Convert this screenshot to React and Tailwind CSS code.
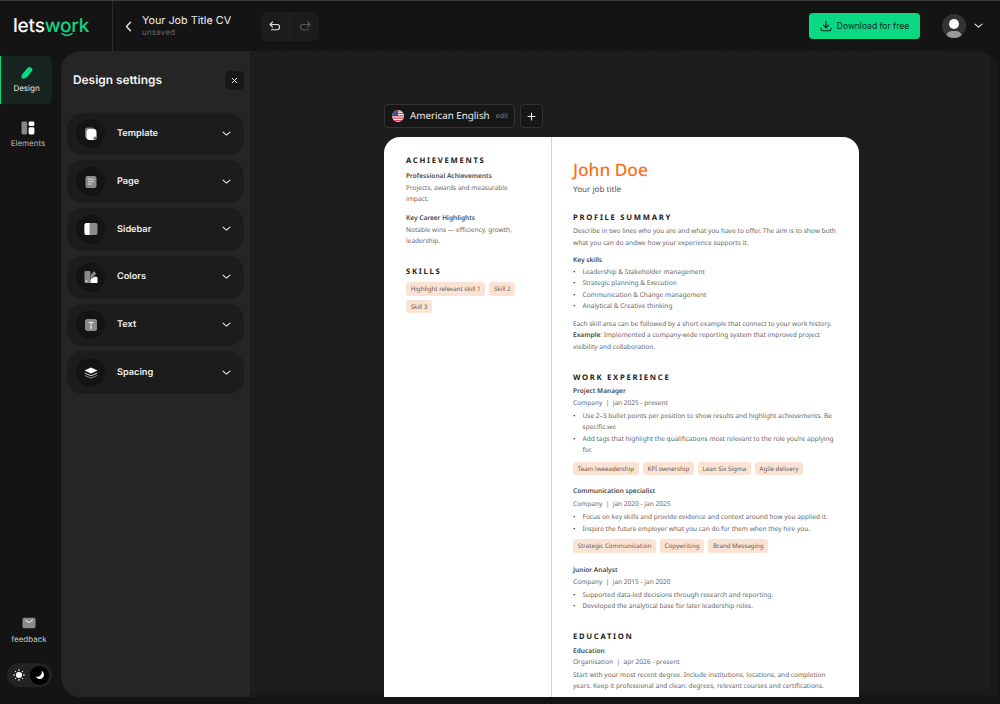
import React from "react";

const H = ({ children, className = "" }) => (
  <h2 className={`text-[7.7px] leading-[12px] font-bold tracking-[1.7px] text-[#222] ${className}`}>{children}</h2>
);
const B = ({ children, className = "" }) => (
  <p className={`font-semibold text-[#484848] ${className}`}>{children}</p>
);
const Bullets = ({ items, className = "" }) => (
  <ul className={className}>
    {items.map((t) => (
      <li key={t} className="flex">
        <span className="w-[9.5px] shrink-0 text-[#333]">•</span>
        <span>{t}</span>
      </li>
    ))}
  </ul>
);
const Tags = ({ items, className = "" }) => (
  <div className={`flex flex-wrap gap-x-[4px] gap-y-[4px] ${className}`}>
    {items.map((t) => (
      <span key={t} className="h-[13.5px] px-[4.7px] rounded-[3px] bg-[#fbe3d3] text-[#6b5a50] text-[6.2px] leading-[13.5px]">{t}</span>
    ))}
  </div>
);

const Chevron = () => (
  <svg width="9" height="6" viewBox="0 0 9 6" fill="none" stroke="#e5e5e5" strokeWidth="1.1" strokeLinecap="round" strokeLinejoin="round"><path d="M1 1.2l3.5 3 3.5-3" /></svg>
);

const icons = {
  Template: (
    <svg width="14" height="14" viewBox="0 0 14 14"><rect x="1" y="0.5" width="9.5" height="11" rx="2.5" fill="#777" /><rect x="2.5" y="2" width="10" height="11" rx="3" fill="#fff" /><circle cx="11" cy="11.2" r="1.6" fill="#777" /></svg>
  ),
  Page: (
    <svg width="14" height="14" viewBox="0 0 14 14"><rect x="1.5" y="1" width="11" height="12" rx="2" fill="#8a8a8a" /><path d="M4 4.2h6M4 6.6h6M4 9h4" stroke="#dcdcdc" strokeWidth="0.9" /></svg>
  ),
  Sidebar: (
    <svg width="14" height="14" viewBox="0 0 14 14"><rect x="0.5" y="1" width="13" height="12" rx="2" fill="#8a8a8a" /><path d="M2.5 1H5.5V13H2.5a2 2 0 0 1-2-2V3a2 2 0 0 1 2-2z" fill="#fff" /></svg>
  ),
  Colors: (
    <svg width="14" height="14" viewBox="0 0 14 14"><rect x="0.5" y="1" width="6" height="12" rx="1" fill="#8a8a8a" /><path d="M7 4.5L10 1.2l2.2 2.2L7 9z" fill="#8a8a8a" /><path d="M6.5 13V9.5L10 6.8h2.3q1.2 0 1.2 1.2V13z" fill="#fff" /><circle cx="2.5" cy="11" r="0.8" fill="#fff" /></svg>
  ),
  Text: (
    <svg width="14" height="14" viewBox="0 0 14 14"><rect x="1" y="1" width="12" height="12" rx="2.5" fill="#8a8a8a" /><path d="M4.5 4.5h5M7 4.5v5.5M5.8 10h2.4" stroke="#eee" strokeWidth="1" fill="none" /></svg>
  ),
  Spacing: (
    <svg width="14" height="12" viewBox="0 0 14 12"><path d="M7 0.5l6.5 3-6.5 3-6.5-3z" fill="#fff" /><path d="M0.7 6l6.3 2.8L13.3 6" fill="none" stroke="#c8c8c8" strokeWidth="1" /><path d="M0.7 8.4l6.3 2.8 6.3-2.8" fill="none" stroke="#8a8a8a" strokeWidth="1" /></svg>
  ),
};

const Row = ({ name }) => (
  <div className="h-[42.7px] rounded-[16px] bg-[#1c1c1c] flex items-center pl-[9px] pr-[13px]">
    <span className="w-[29px] h-[29px] rounded-full bg-[#141414] flex items-center justify-center shrink-0">{icons[name]}</span>
    <span className="ml-[12px] flex-1 text-[9.2px] font-semibold text-[#f0f0f0]">{name}</span>
    <Chevron />
  </div>
);

export default function App() {
  return (
    <div className="w-[1000px] h-[704px] bg-[#141414] overflow-hidden flex flex-col border-t border-[#3a3a3a] font-['Inter',sans-serif] text-white antialiased [text-rendering:geometricPrecision]">
      {/* Header */}
      <header className="h-[50px] shrink-0 flex items-stretch">
        <div className="w-[113px] border-r border-[#2c2c2c] flex items-center pl-[13px] pb-[1px]">
          <span className="text-[19px] font-medium tracking-[-0.2px] leading-none relative">
            lets<span className="text-[#0fd686]">work</span>
            <svg className="absolute left-[47px] top-[16px]" width="14" height="6" viewBox="0 0 14 6" fill="none" stroke="#0fd686" strokeWidth="1.6" strokeLinecap="round"><path d="M2 1.5q5 4 10 0" /></svg>
          </span>
        </div>
        <div className="flex items-center pl-[12px]">
          <svg width="7" height="11" viewBox="0 0 7 11" fill="none" stroke="#eee" strokeWidth="1.3" strokeLinecap="round" strokeLinejoin="round"><path d="M5.5 1.2L1.5 5.5l4 4.3" /></svg>
          <div className="ml-[10px] w-[119px] pb-[2px]">
            <div className="text-[10.8px] leading-[13px] font-normal text-[#ededed] whitespace-nowrap">Your Job Title CV</div>
            <div className="text-[8px] leading-[10px] text-[#666] tracking-[0.2px]">unsaved</div>
          </div>
          <div className="h-[29px] w-[58px] rounded-[6px] bg-[#1c1c1c] flex items-center">
            <div className="w-[29px] h-full flex items-center justify-center border-r border-[#252525]">
              <svg width="12" height="11" viewBox="0 0 12 11" fill="none" stroke="#e0e0e0" strokeWidth="1.1" strokeLinecap="round" strokeLinejoin="round"><path d="M3.5 1L1 3.5 3.5 6M1 3.5h7a2.6 2.6 0 0 1 0 5.2H2.5" /></svg>
            </div>
            <div className="w-[29px] h-full flex items-center justify-center">
              <svg width="12" height="11" viewBox="0 0 12 11" fill="none" stroke="#555" strokeWidth="1.1" strokeLinecap="round" strokeLinejoin="round"><path d="M8.5 1L11 3.5 8.5 6M11 3.5H4a2.6 2.6 0 0 0 0 5.2h5.5" /></svg>
            </div>
          </div>
        </div>
        <div className="ml-auto flex items-center pr-[17px]">
          <button className="w-[111px] h-[26px] rounded-[4px] bg-[#0ad984] flex items-center justify-center gap-[5px] text-[#0b2a1d] text-[8.5px] font-normal">
            <svg width="12" height="12" viewBox="0 0 12 12" fill="none" stroke="#0b2a1d" strokeWidth="1.1" strokeLinecap="round" strokeLinejoin="round"><path d="M6 1v6.6M3.4 5.2L6 7.8l2.6-2.6M1 8v1.2q0 1.6 1.6 1.6h6.8q1.6 0 1.6-1.6V8" /></svg>
            Download for free
          </button>
          <div className="ml-[22px] w-[24px] h-[24px] rounded-full bg-[#333] overflow-hidden relative">
            <span className="absolute left-[7px] top-[5px] w-[10px] h-[10px] rounded-full bg-white" />
            <span className="absolute left-[4px] top-[17px] w-[16px] h-[12px] rounded-full bg-[#9a9a9a]" />
          </div>
          <span className="ml-[8px]"><Chevron /></span>
        </div>
      </header>

      {/* Body */}
      <div className="flex-1 min-h-0 flex pb-[7px] pr-[2px]">
        <aside className="w-[61px] shrink-0 flex flex-col">
          <div className="mt-[5px] w-[52px] h-[48px] rounded-r-[5px] bg-[#182420] border-l-[1.5px] border-[#0ad984] flex flex-col items-center justify-center">
            <svg width="14" height="14" viewBox="0 0 14 14"><path d="M1.5 12.5q-.5-2.5 1-4.5l5-6q1.5-1.5 3.5-.5t1.3 3.2l-5 6q-2 2.2-5.8 1.8z" fill="#0ad984" /></svg>
            <span className="text-[8px] leading-[11px] mt-[3px] text-[#e8e8e8]">Design</span>
          </div>
          <div className="mt-[7px] w-[56px] h-[48px] flex flex-col items-center justify-center">
            <svg width="14" height="14" viewBox="0 0 14 14"><rect x="0.5" y="0.5" width="5.6" height="13" rx="1.4" fill="#888" /><rect x="7.6" y="0.5" width="5.8" height="4.6" rx="1.4" fill="#fff" /><rect x="7.6" y="6.2" width="5.8" height="7.3" rx="1.4" fill="#fff" /></svg>
            <span className="text-[8px] leading-[11px] mt-[3px] text-[#b5b5b5]">Elements</span>
          </div>
          <div className="mt-auto w-[58px] flex flex-col items-center">
            <svg width="14" height="12" viewBox="0 0 14 12"><rect x="0.5" y="0.8" width="13" height="10.4" rx="1.6" fill="#8c8c8c" /><path d="M3.5 3.2L7 5.6l3.5-2.4" fill="none" stroke="#f2f2f2" strokeWidth="1" strokeLinecap="round" /></svg>
            <span className="text-[8px] leading-[11px] mt-[5px] text-[#c8c8c8]">feedback</span>
          </div>
          <div className="mt-[18px] ml-[7px] mb-[10px] w-[45px] h-[24px] rounded-full bg-[#232323] flex items-center justify-between pl-[6px] pr-[3px]">
            <svg width="12" height="12" viewBox="0 0 12 12"><circle cx="6" cy="6" r="3" fill="#fff" /><g stroke="#fff" strokeWidth="1" strokeLinecap="round"><path d="M6 .6v1M6 10.4v1M.6 6h1M10.4 6h1M2.2 2.2l.7.7M9.1 9.1l.7.7M2.2 9.8l.7-.7M9.1 2.9l.7-.7" /></g></svg>
            <span className="w-[19px] h-[19px] rounded-full bg-black flex items-center justify-center">
              <svg width="10" height="10" viewBox="0 0 10 10"><path d="M6.5 .8a4.3 4.3 0 1 1-5.7 5.7 4.5 4.5 0 0 0 5.7-5.7z" fill="#fff" /></svg>
            </span>
          </div>
        </aside>

        <main className="flex-1 min-w-0 flex rounded-[20px] rounded-br-none overflow-hidden bg-[#191919]">
          {/* Settings */}
          <section className="w-[189px] shrink-0 bg-[#252525] px-[6px]">
            <div className="flex items-center justify-between pl-[6px] h-[58px] mb-[3.5px]">
              <h1 className="text-[11.9px] font-semibold text-[#f2f2f2]">Design settings</h1>
              <button className="w-[19px] h-[19px] rounded-[5px] bg-[#171717] flex items-center justify-center">
                <svg width="7" height="7" viewBox="0 0 7 7" stroke="#eee" strokeWidth="1" strokeLinecap="round"><path d="M1.2 1.2l4.6 4.6M5.8 1.2L1.2 5.8" /></svg>
              </button>
            </div>
            <div className="flex flex-col gap-[5.1px]">
              {Object.keys(icons).map((n) => <Row key={n} name={n} />)}
            </div>
          </section>

          {/* Canvas */}
          <section className="relative flex-1 min-w-0 overflow-hidden pl-[134px] pt-[53px]">
            <div className="absolute left-0 top-0 right-[8px] bottom-[4px] rounded-r-[10px] bg-[#1c1c1c] bg-[radial-gradient(#313131_0.7px,transparent_0.95px)] bg-[size:8.33px_8.33px]" />
            <div className="relative flex gap-[5px] h-[24px]">
              <div className="w-[131px] rounded-[4px] border border-[#333] bg-[#171717] flex items-center pl-[7px] whitespace-nowrap">
                <svg width="12" height="12" viewBox="0 0 12 12" className="shrink-0">
                  <defs><clipPath id="f"><circle cx="6" cy="6" r="6" /></clipPath></defs>
                  <g clipPath="url(#f)">
                    <rect width="12" height="12" fill="#f4f4f4" />
                    <path d="M0 1h12M0 3.4h12M0 5.8h12M0 8.2h12M0 10.6h12" stroke="#d9425a" strokeWidth="1.2" />
                    <rect width="6" height="6" fill="#3f4f8f" />
                  </g>
                </svg>
                <span className="ml-[6px] text-[9.8px] text-[#ececec] font-['Noto_Sans',sans-serif]">American English</span>
                <span className="ml-[6px] text-[7px] text-[#777]">edit</span>
              </div>
              <div className="w-[23px] rounded-[4px] border border-[#333] bg-[#171717] flex items-center justify-center">
                <svg width="9" height="9" viewBox="0 0 9 9" stroke="#eee" strokeWidth="1.1" strokeLinecap="round"><path d="M4.5 1v7M1 4.5h7" /></svg>
              </div>
            </div>

            <article className="relative mt-[9px] w-[475px] h-[700px] bg-white rounded-t-[16px] flex font-['Noto_Sans',sans-serif] text-[6.55px] leading-[11.55px] text-[#666]">
              {/* Sidebar */}
              <div className="w-[168px] shrink-0 border-r border-[#d4d4d4] pl-[22px] pr-[20px] pt-[18px]">
                <H>ACHIEVEMENTS</H>
                <B className="mt-[3px]">Professional Achievements</B>
                <p>Projects, awards and measurable impact.</p>
                <B className="mt-[7px]">Key Career Highlights</B>
                <p className="mt-[0.5px]">Notable wins — efficiency, growth, leadership.</p>
                <H className="mt-[19.5px]">SKILLS</H>
                <Tags className="mt-[4px]" items={["Highlight relevant skill 1", "Skill 2", "Skill 3"]} />
              </div>
              {/* Main */}
              <div className="flex-1 min-w-0 pl-[21px] pr-[21px] pt-[22px]">
                <div className="text-[17.3px] leading-[24px] font-medium text-[#f97316]">John Doe</div>
                <div className="text-[8.1px] leading-[12px] text-[#555] mt-[1px]">Your job title</div>
                <H className="mt-[16px]">PROFILE SUMMARY</H>
                <p className="mt-[1px]">Describe in two lines who you are and what you have to offer. The aim is to show both what you can do andwe how your experience supports it.</p>
                <B className="mt-[6px]">Key skills</B>
                <Bullets items={["Leadership & Stakeholder management", "Strategic planning & Execution", "Communication & Change management", "Analytical & Creative thinking"]} />
                <p className="mt-[6px]">Each skill area can be followed by a short example that connect to your work history. <b className="font-semibold text-[#484848]">Example</b>: Implemented a company-wide reporting system that improved project visibility and collaboration.</p>

                <H className="mt-[20px]">WORK EXPERIENCE</H>
                <B className="mt-[1px]">Project Manager</B>
                <p>Company&nbsp; |&nbsp; jan 2025 - present</p>
                <Bullets className="mt-[1px]" items={["Use 2–3 bullet points per position to show results and highlight achievements. Be specific.we", "Add tags that highlight the qualifications most relevant to the role you’re applying for."]} />
                <Tags className="mt-[6px]" items={["Team lweeadership", "KPI ownership", "Lean Six Sigma", "Agile delivery"]} />
                <B className="mt-[10px]">Communication specialist</B>
                <p className="mt-[1px]">Company&nbsp; |&nbsp; jan 2020 - jan 2025</p>
                <Bullets className="mt-[2px]" items={["Focus on key skills and provide evidence and context around how you applied it.", "Inspire the future employer what you can do for them when they hire you."]} />
                <Tags className="mt-[5px]" items={["Strategic Communication", "Copywriting", "Brand Messaging"]} />
                <B className="mt-[11px]">Junior Analyst</B>
                <p className="mt-[0.5px]">Company&nbsp; |&nbsp; jan 2015 - jan 2020</p>
                <Bullets className="mt-[1px]" items={["Supported data-led decisions through research and reporting.", "Developed the analytical base for later leadership roles."]} />

                <H className="mt-[19px]">EDUCATION</H>
                <B className="mt-[2px]">Education</B>
                <p>Organisation&nbsp; |&nbsp; apr 2026 - present</p>
                <p className="mt-[1px]">Start with your most recent degree. Include institutions, locations, and completion years. Keep it professional and clean: degrees, relevant courses and certifications.</p>
              </div>
            </article>
          </section>
        </main>
      </div>
    </div>
  );
}
